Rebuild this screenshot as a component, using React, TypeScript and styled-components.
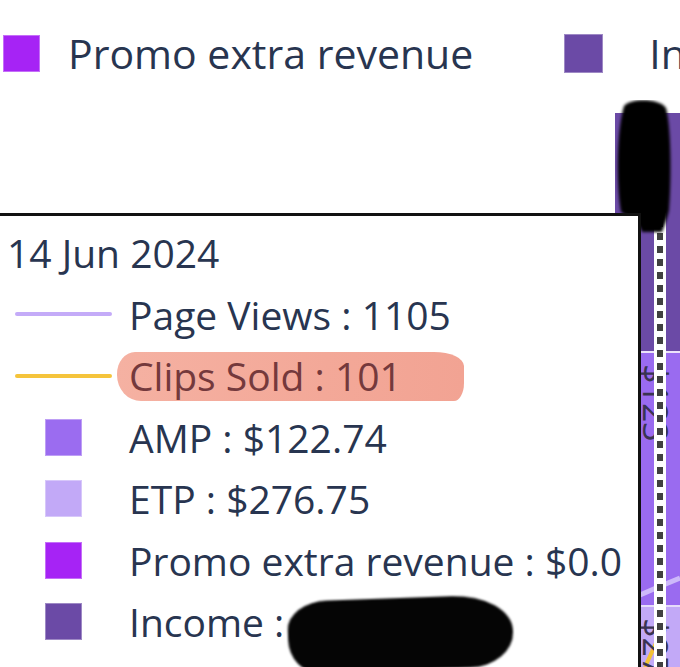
import React from 'react';
import styled, { createGlobalStyle } from 'styled-components';

const GlobalStyle = createGlobalStyle`
  html, body {
    margin: 0;
    padding: 0;
    background: #ffffff;
  }
  body {
    font-family: 'Open Sans', 'Noto Sans', sans-serif;
    color: #283550;
  }
`;

const Page = styled.div`
  position: relative;
  width: 680px;
  height: 667px;
  overflow: hidden;
  background: #ffffff;
`;

const Legend = styled.div`
  display: flex;
  align-items: flex-start;
  gap: 91px;
  height: 100px;
  padding: 33px 0 0 3px;
  box-sizing: border-box;
  white-space: nowrap;
`;

const LegendItem = styled.div<{ $gap: number }>`
  display: flex;
  align-items: center;
  gap: ${(p) => p.$gap}px;
  font-size: 41px;
  line-height: 41px;
`;

const Swatch = styled.span<{ $color: string; $size?: number }>`
  display: inline-block;
  flex: none;
  width: ${(p) => p.$size ?? 37}px;
  height: ${(p) => p.$size ?? 37}px;
  background: ${(p) => p.$color};
  box-shadow: inset 0 0 0 1px rgba(255, 255, 255, 0.35);
`;

const ChartArea = styled.div`
  position: relative;
  height: 567px;
`;

const Plot = styled.svg`
  position: absolute;
  inset: 0;
`;

const Tooltip = styled.div`
  position: absolute;
  left: -10px;
  top: 113px;
  width: 651px;
  height: 600px;
  box-sizing: border-box;
  background: #ffffff;
  border: 3px solid #111111;
  padding: 6px 0 0 14px;
  font-size: 39px;
`;

const Title = styled.div`
  height: 61.5px;
  line-height: 61.5px;
`;

const Row = styled.div`
  display: flex;
  align-items: center;
  height: 61.5px;
  white-space: nowrap;
`;

const MarkerCell = styled.div`
  width: 97px;
  margin-left: 8px;
  margin-right: 17px;
  display: flex;
  justify-content: center;
  align-items: center;
  flex: none;
`;

const LineMarker = styled.span<{ $color: string }>`
  display: block;
  width: 97px;
  height: 4px;
  border-radius: 2px;
  background: ${(p) => p.$color};
`;

const Label = styled.span`
  line-height: 1;
`;

const Highlight = styled.span`
  display: inline-block;
  margin-left: -12px;
  padding: 4px 62px 6px 12px;
  line-height: 1;
  color: #74393c;
  background: linear-gradient(92deg, #f5b1a2 0%, #f3a898 60%, #f2a393 100%);
  border-radius: 18px 30px 10px 24px / 22px 14px 18px 26px;
  transform: translateY(1px);
`;

const Redacted = styled.span`
  display: inline-block;
  width: 225px;
  height: 72px;
  margin-left: 4px;
  background: #050505;
  border-radius: 40px 60px 44px 30px / 28px 36px 34px 34px;
  filter: blur(1.2px);
  transform: translateY(12px) rotate(-2deg);
`;

type Series = {
  name: string;
  value: string;
  kind: 'line' | 'bar';
  color: string;
  highlight?: boolean;
  redacted?: boolean;
};

const series: Series[] = [
  { name: 'Page Views', value: '1105', kind: 'line', color: '#c4abf8' },
  { name: 'Clips Sold', value: '101', kind: 'line', color: '#f5c43b', highlight: true },
  { name: 'AMP', value: '$122.74', kind: 'bar', color: '#9b6cf0' },
  { name: 'ETP', value: '$276.75', kind: 'bar', color: '#c2a9f7' },
  { name: 'Promo extra revenue', value: '$0.0', kind: 'bar', color: '#a623f5' },
  { name: 'Income', value: '', kind: 'bar', color: '#6b4aa6', redacted: true },
];

// plot coordinates are page y minus 100 (legend height)
function ChartCanvas() {
  return (
    <Plot width={680} height={567} viewBox="0 0 680 567">
      <defs>
        <filter id="soft" x="-20%" y="-20%" width="140%" height="140%">
          <feGaussianBlur stdDeviation="1.4" />
        </filter>
      </defs>
      <rect x={615} y={13} width={65} height={238} fill="#6b4aa6" />
      <rect x={615} y={251} width={65} height={2} fill="#ece3fb" />
      <rect x={615} y={253} width={65} height={252} fill="#9a6bf0" />
      <rect x={615} y={505} width={65} height={2} fill="#e6dcfa" />
      <rect x={615} y={507} width={65} height={60} fill="#c2a9f7" />
      <path d="M640 495 Q660 486 680 478" stroke="#cdb9fa" strokeWidth={5} fill="none" />
      <path d="M645 567 L656 543" stroke="#f3c235" strokeWidth={4} fill="none" />
      <text
        x={643}
        y={264}
        transform="rotate(90 643 264)"
        fontSize={34}
        fill="#3a3352"
        fontFamily="'Open Sans', sans-serif"
      >
        $123
      </text>
      <text
        x={643}
        y={518}
        transform="rotate(90 643 518)"
        fontSize={34}
        fill="#3a3352"
        fontFamily="'Open Sans', sans-serif"
      >
        $277
      </text>
      <rect x={654} y={113} width={12} height={454} fill="#ffffff" />
      <line
        x1={660}
        y1={120}
        x2={660}
        y2={567}
        stroke="#404040"
        strokeWidth={6}
        strokeDasharray="7 6"
      />
      <path
        d="M624 6 C630 -2 660 -2 666 8 C672 30 671 90 669 110 C667 120 664 126 662 132 L642 132 C640 124 630 118 621 112 C616 80 617 30 624 6 Z"
        fill="#000000"
        filter="url(#soft)"
      />
    </Plot>
  );
}

export default function App() {
  return (
    <Page>
      <GlobalStyle />
      <Legend>
        <LegendItem $gap={28}>
          <Swatch $color="#a623f5" />
          <span>Promo extra revenue</span>
        </LegendItem>
        <LegendItem $gap={46}>
          <Swatch $color="#6b4aa6" $size={39} />
          <span>Income</span>
        </LegendItem>
      </Legend>
      <ChartArea>
        <ChartCanvas />
        <Tooltip>
          <Title>14 Jun 2024</Title>
          {series.map((s) => (
            <Row key={s.name}>
              <MarkerCell>
                {s.kind === 'line' ? <LineMarker $color={s.color} /> : <Swatch $color={s.color} />}
              </MarkerCell>
              {s.highlight ? (
                <Highlight>
                  {s.name} : {s.value}
                </Highlight>
              ) : (
                <Label>
                  {s.name} :{s.redacted ? '' : ` ${s.value}`}
                </Label>
              )}
              {s.redacted && <Redacted />}
            </Row>
          ))}
        </Tooltip>
      </ChartArea>
    </Page>
  );
}
